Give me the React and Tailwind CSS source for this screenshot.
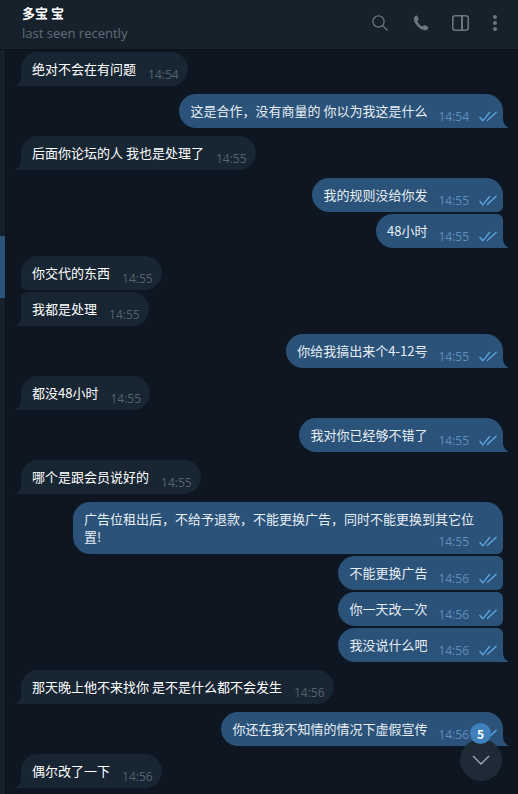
import React from 'react';

const MESSAGES = [
  { out: false, text: '绝对不会在有问题', time: '14:54', tail: true },
  { out: true, text: '这是合作\uFF0C没有商量的 你以为我这是什么', time: '14:54', tail: true },
  { out: false, text: '后面你论坛的人 我也是处理了', time: '14:55', tail: true },
  { out: true, text: '我的规则没给你发', time: '14:55', group: true },
  { out: true, text: '48小时', time: '14:55', tail: true, joined: true },
  { out: false, text: '你交代的东西', time: '14:55', group: true },
  { out: false, text: '我都是处理', time: '14:55', tail: true, joined: true },
  { out: true, text: '你给我搞出来个4-12号', time: '14:55', tail: true },
  { out: false, text: '都没48小时', time: '14:55', tail: true },
  { out: true, text: '我对你已经够不错了', time: '14:55', tail: true },
  { out: false, text: '哪个是跟会员说好的', time: '14:55', tail: true },
  { out: true, text: '广告位租出后\uFF0C不给予退款\uFF0C不能更换广告\uFF0C同时不能更换到其它位置!', time: '14:55', wrap: true, group: true },
  { out: true, text: '不能更换广告', time: '14:56', joined: true, group: true },
  { out: true, text: '你一天改一次', time: '14:56', joined: true, group: true },
  { out: true, text: '我没说什么吧', time: '14:56', joined: true, tail: true },
  { out: false, text: '那天晚上他不来找你 是不是什么都不会发生', time: '14:56', tail: true },
  { out: true, text: '你还在我不知情的情况下虚假宣传', time: '14:56', tail: true },
  { out: false, text: '偶尔改了一下', time: '14:56', tail: true },
];

function Checks() {
  return (
    <svg width="18" height="11" viewBox="0 0 18 11" fill="none" stroke="#5fa8e3" strokeWidth="1.3" className="ml-[10px] mb-[2px] shrink-0">
      <path d="M0.5 6 L3.8 9.8 L11 1" />
      <path d="M8 9.8 L17.5 1" />
    </svg>
  );
}

function Meta({ out, time }) {
  return (
    <div className={`flex items-end text-[12px] leading-[14px] font-['Open_Sans',sans-serif] ${out ? 'text-[#5f8fbd]' : 'text-[#56636f]'}`}>
      <span>{time}</span>
      {out && <Checks />}
    </div>
  );
}

function Bubble({ out, text, time, tail, wrap, joined, group }) {
  const shape = out
    ? `rounded-l-[17px] ${joined ? 'rounded-tr-[6px]' : 'rounded-tr-[17px]'} ${tail ? 'rounded-br-none' : 'rounded-br-[6px]'}`
    : `rounded-r-[17px] ${joined ? 'rounded-tl-[6px]' : 'rounded-tl-[17px]'} ${tail ? 'rounded-bl-none' : 'rounded-bl-[6px]'}`;

  return (
    <div className={`flex ${out ? 'justify-end pr-[15px]' : 'justify-start pl-[15px]'} ${group ? 'mb-[2px]' : 'mb-[8px]'}`}>
      <div className={`relative ${out ? 'bg-[#2b5278] text-[#e6eef6]' : 'bg-[#182533] text-white'} ${shape} ${wrap ? 'w-[430px] flex flex-col' : 'flex items-end'} pl-[11px] ${out ? 'pr-[6px]' : 'pr-[9px]'} py-[8px] text-[13px] leading-[18px]`}>
        <div className={wrap ? 'pr-[15px]' : 'whitespace-nowrap'}>{text}</div>
        <div className={wrap ? 'self-end -mt-[11px] -mb-[3px]' : `${out ? 'ml-[11px]' : 'ml-[12px]'} -mb-[4px]`}>
          <Meta out={out} time={time} />
        </div>
        {tail && (
          <svg width="6" height="10" viewBox="0 0 6 10" className={`absolute bottom-0 ${out ? '-right-[6px]' : '-left-[6px] -scale-x-100'}`}>
            <path d="M0 0 C0 5 2 8 6 10 L0 10 Z" fill={out ? '#2b5278' : '#182533'} />
          </svg>
        )}
      </div>
    </div>
  );
}

export default function App() {
  return (
    <div className="relative w-[518px] h-[794px] overflow-hidden flex flex-col bg-[#0e1621] font-['Noto_Sans_CJK_SC',sans-serif]">
      {/* Header */}
      <div className="h-[50px] shrink-0 flex items-start bg-[#17212b] pl-[22px] pr-[21px] border-b border-[#0b1119]">
        <div className="flex-1 pt-[4px]">
          <div className="text-[13px] leading-[18px] font-bold text-white">多宝 宝</div>
          <div className="text-[13px] leading-[18px] mt-[2px] text-[#5f6d7b] font-['Open_Sans',sans-serif]">last seen recently</div>
        </div>
        <div className="flex items-center pt-[15px] text-[#6b7680]">
          <svg width="16" height="16" viewBox="0 0 16 16" fill="none" stroke="currentColor" strokeWidth="1.3">
            <circle cx="6.5" cy="6.5" r="5.6" />
            <path d="M10.6 10.6 L15.6 15.6" />
          </svg>
          <svg width="16" height="16" viewBox="0 0 18 18" fill="currentColor" className="ml-[25px]">
            <path d="M3.2 .8 C4 .4 4.8 .8 5.1 1.5 L6.2 4.2 C6.5 5 6.2 5.6 5.7 6.1 L4.9 6.9 C5.7 9.3 8.4 12 10.9 12.8 L11.9 11.9 C12.4 11.4 13.1 11.3 13.8 11.6 L16.3 12.8 C17.1 13.2 17.4 14 17 14.8 C16.2 16.6 14.8 17.4 13 17.1 C7.6 16.2 2 10.4 1 5.3 C.6 3.2 1.5 1.6 3.2 .8 Z" />
          </svg>
          <svg width="17" height="16" viewBox="0 0 17 16" fill="none" stroke="currentColor" strokeWidth="1.6" className="ml-[23px]">
            <rect x="0.8" y="0.8" width="15.4" height="14.4" rx="2.5" />
            <path d="M10 1 V15" strokeWidth="2" />
          </svg>
          <div className="ml-[24px] flex flex-col gap-[2px]">
            <span className="w-[4px] h-[4px] rounded-full bg-current" />
            <span className="w-[4px] h-[4px] rounded-full bg-current" />
            <span className="w-[4px] h-[4px] rounded-full bg-current" />
          </div>
        </div>
      </div>

      <div className="flex flex-1 min-h-0">
        {/* Left strip with the scroll marker */}
        <div className="w-[6px] shrink-0 bg-[#15202a] border-r border-[#0b1119] pt-[186px]">
          <div className="h-[62px] bg-[#2b5278]" />
        </div>
        {/* Messages */}
        <div className="flex-1 pt-[2px]">
          {MESSAGES.map((m, i) => (
            <Bubble key={i} {...m} />
          ))}
        </div>
      </div>

      {/* Scroll to bottom */}
      <div className="absolute left-[460px] top-[739px] w-[42px] h-[42px] rounded-full bg-[#1e2a36] flex items-center justify-center">
        <svg width="18" height="10" viewBox="0 0 18 10" fill="none" stroke="#9aa3ab" strokeWidth="1.5">
          <path d="M1 1 L9 9 L17 1" />
        </svg>
      </div>
      <div className="absolute left-[470px] top-[723px] w-[21px] h-[21px] rounded-full bg-[#3f81bd] flex items-center justify-center text-white text-[12px] font-bold">5</div>
    </div>
  );
}
